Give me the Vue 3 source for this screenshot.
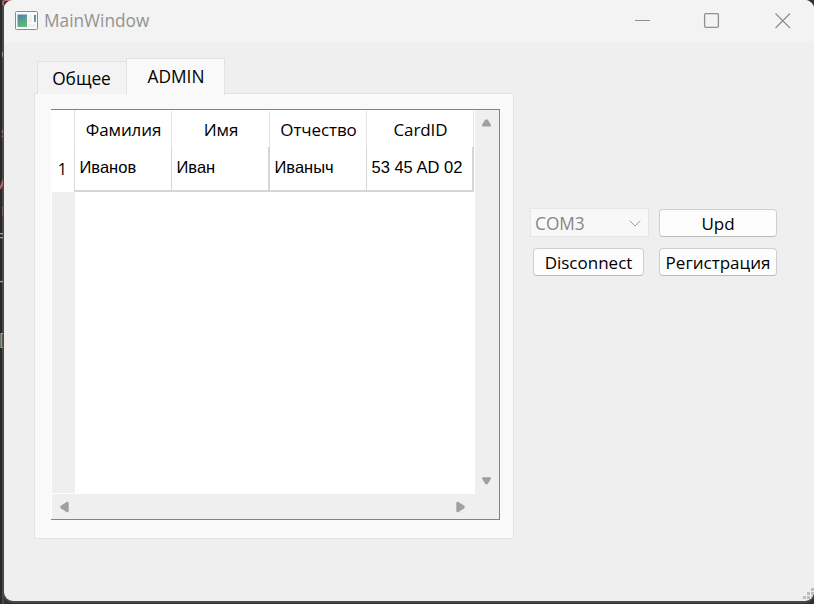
<script setup>
const headers = ['Фамилия', 'Имя', 'Отчество', 'CardID']
const row = ['Иванов', 'Иван', 'Иваныч', '53 45 AD 02']
const fragments = [
  { ch: 'a', top: -8, left: 1, color: '#c9686c' },
  { ch: 'e', top: 45, left: 1, color: '#a9a9a0' },
  { ch: 's', top: 124, left: 0, color: '#c9686c' },
  { ch: 'A', top: 175, left: -1, color: '#c9686c' },
  { ch: 'r', top: 202, left: 0, color: '#d9686c' },
  { ch: '=', top: 227, left: -2, color: '#a9a48c' },
  { ch: '-', top: 272, left: -3, color: '#a9a48c' },
  { ch: '[', top: 331, left: -3, color: '#b9a070' }
]
</script>

<template>
  <div class="desktop">
    <span
      v-for="f in fragments"
      :key="f.top"
      class="fragment"
      :style="{ top: f.top + 'px', left: f.left + 'px', color: f.color }"
    >{{ f.ch }}</span>
    <div class="window">
      <header class="titlebar">
        <svg class="app-icon" width="23" height="19" viewBox="0 0 23 19">
          <defs>
            <linearGradient id="g" x1="0" y1="0" x2="0.4" y2="1">
              <stop offset="0" stop-color="#4a7fae" />
              <stop offset="1" stop-color="#62b67c" />
            </linearGradient>
          </defs>
          <rect x="0.5" y="0.5" width="22" height="18" rx="1" fill="#f8f9fa" stroke="#858b92" />
          <rect x="2.5" y="3.5" width="9.5" height="12.5" fill="url(#g)" />
          <rect x="13" y="4" width="4" height="8" fill="#f0f2ee" />
          <rect x="13" y="13" width="8" height="3" fill="#edefeb" />
          <rect x="19" y="4" width="2" height="7" fill="url(#g)" />
        </svg>
        <span class="title">MainWindow</span>
        <svg class="controls" width="156" height="16" viewBox="0 0 156 16" fill="none" stroke="#8f8f8f">
          <path d="M0 7.5H15" />
          <rect x="69.6" y="0.6" width="13.8" height="13.8" rx="1.3" stroke-width="1.3" />
          <path d="M140.5 0.5L155 15M155 0.5L140.5 15" stroke-width="1.2" />
        </svg>
      </header>

      <main class="content">
        <section class="tabs">
          <nav class="tabbar">
            <div class="tab first"><span>Общее</span></div>
            <div class="tab active"><span>ADMIN</span></div>
          </nav>
          <div class="pane">
            <div class="table">
              <div class="view">
                <div class="vheader">
                  <div class="corner"></div>
                  <div class="rownum">1</div>
                  <div class="vfill"></div>
                </div>
                <div class="cells">
                  <div class="grid head">
                    <div v-for="h in headers" :key="h" class="th"><span>{{ h }}</span></div>
                  </div>
                  <div class="grid body">
                    <div v-for="(c, i) in row" :key="c" class="td" :class="{ thick: i % 2 }"><span>{{ c }}</span></div>
                  </div>
                </div>
              </div>
              <div class="vscroll">
                <svg width="11" height="8" viewBox="0 0 11 8"><path d="M4.2 .8Q5.5-.5 6.8.8L9.8 5.5Q10.5 7.3 9 7.5H2Q.5 7.3 1.2 5.5Z" fill="#a0a0a0" /></svg>
                <svg width="11" height="8" viewBox="0 0 11 8"><path d="M4.2 6.8Q5.5 8 6.8 6.8L9.8 2.1Q10.5.3 9 .2H2Q.5.3 1.2 2.1Z" fill="#a0a0a0" /></svg>
              </div>
              <div class="hscroll">
                <svg width="9" height="12" viewBox="0 0 9 12"><path d="M.8 4.8Q-.4 6 .8 7.2L6.5 11Q8.5 11.7 8.7 10V2Q8.5.3 6.5 1Z" fill="#a0a0a0" /></svg>
                <svg width="9" height="12" viewBox="0 0 9 12"><path d="M8.2 4.8Q9.4 6 8.2 7.2L2.5 11Q.5 11.7.3 10V2Q.5.3 2.5 1Z" fill="#a0a0a0" /></svg>
              </div>
              <div class="scroll-corner"></div>
            </div>
          </div>
        </section>

        <section class="actions">
          <div class="combo">
            <span>COM3</span>
            <svg width="12" height="7" viewBox="0 0 12 7" fill="none" stroke="#a0a0a0"><path d="M.7.7L6 6L11.3.7" /></svg>
          </div>
          <button class="btn"><span>Upd</span></button>
          <button class="btn disconnect"><span>Disconnect</span></button>
          <button class="btn"><span>Регистрация</span></button>
        </section>
      </main>
      <svg class="grip" width="12" height="12" viewBox="0 0 12 12" fill="#bdbdbd">
        <path d="M8 0h3v3h-3zM4 4h3v3h-3zM8 4h3v3h-3zM0 8h3v3h-3zM4 8h3v3h-3zM8 8h3v3h-3z" />
      </svg>
    </div>
  </div>
</template>

<style>
body { overflow: hidden; }
</style>

<style scoped>
* { box-sizing: border-box; }
.desktop {
  position: relative;
  width: 814px;
  height: 604px;
  padding-left: 4px;
  overflow: hidden;
  background: linear-gradient(90deg, #292929 0 2px, #4a4948 2px 4px, #303030 4px);
  font-family: "Open Sans", "Noto Sans", sans-serif;
  font-size: 17.3px;
  color: #000;
}
.fragment {
  position: absolute;
  font: 17px/20px "Liberation Mono", monospace;
}
.window {
  position: relative;
  width: 810px;
  height: 601px;
  background: #efefef;
  border-radius: 9px;
  box-shadow: 0 1px 0 1px #484848;
  overflow: hidden;
}
.titlebar {
  height: 43px;
  display: flex;
  align-items: center;
  padding: 0 23px 3px 11px;
  background: #f3f3f3;
}
.title {
  margin: 1px 0 0 6px;
  color: #929292;
}
.controls { margin: 2px 0 0 auto; }
.content { display: flex; align-items: flex-start; }
.tabs { width: 480px; margin: 15px 0 0 30px; }
.tabbar { display: flex; align-items: flex-end; height: 36px; padding-left: 3px; }
.tab {
  display: flex;
  align-items: center;
  justify-content: center;
  border: 1px solid #e3e3e3;
  border-bottom: 0;
  background: #f3f3f3;
}
.first { width: 90px; height: 33px; padding: 0 2px 0 0; border-right: 0; }
.active { width: 99px; height: 37px; position: relative; z-index: 1; margin-bottom: -1px; padding: 0 0 2px 1px; background: #f9f9f9; margin-left: -1px; }
.pane {
  height: 446px;
  margin-top: -1px;
  padding: 15px 13px 0 16px;
  border: 1px solid #e3e3e3;
  background: #f9f9f9;
}
.table {
  display: grid;
  grid-template-columns: 424px 24px;
  grid-template-rows: 384px 25px;
  width: 449px;
  height: 411px;
  border: 1px solid #82828c;
  border-left: 0;
  background: #efefef;
}
.view { display: flex; background: #fff; }
.vheader { width: 24px; display: flex; flex-direction: column; }
.corner { height: 37px; border-right: 1px solid #e2e2e2; }
.rownum { height: 45px; padding-right: 7px; border-right: 1px solid #dadada; text-align: right; font-size: 16px; line-height: 44px; }
.vfill { flex: 1; margin: 0 0 1px 1px; background: #efefef; }
.cells { width: 400px; }
.grid { display: grid; grid-template-columns: 97px 98px 97px 107px; width: 400px; }
.head { height: 37px; padding-top: 1px; font-size: 17px; letter-spacing: -0.1px; }
.th { display: flex; align-items: center; justify-content: center; padding-left: 1px; border-right: 1px solid #e4e4e4; }
.body { height: 45px; }
.td {
  display: flex;
  align-items: center;
  padding: 0 0 2px 4.5px;
  border-right: 1px solid #d6d6d6;
  border-bottom: 2px solid #d6d6d6;
  font-family: "Liberation Sans", sans-serif;
  font-size: 16.5px;
  white-space: nowrap;
}
.thick { border-right-width: 2px; }
.vscroll { display: flex; flex-direction: column; align-items: center; justify-content: space-between; padding: 9px 2px 9px 0; }
.hscroll { display: flex; align-items: center; justify-content: space-between; padding: 0 10px 0 8px; border-left: 1px solid #fff; }
.actions {
  display: grid;
  grid-template-columns: 119px 118px;
  grid-template-rows: 28px 28px;
  gap: 11px 10px;
  margin: 166px 0 0 16px;
}
.combo {
  display: flex;
  align-items: center;
  justify-content: space-between;
  height: 29px;
  margin-top: -1px;
  padding: 1px 7px 0 4px;
  border: 1px solid #e6e6e6;
  background: #f8f8f8;
  color: #878787;
}
.btn {
  display: flex;
  align-items: center;
  justify-content: center;
  height: 28px;
  padding: 1px 0 0;
  border: 1px solid #cfcfcf;
  border-bottom-color: #b9b9b9;
  border-radius: 4px;
  background: #fdfdfd;
  font: inherit;
  font-size: 17px;
  color: #000;
  white-space: nowrap;
}
.disconnect { width: 111px; margin-left: 3px; }
.grip { position: absolute; right: -1px; bottom: 1px; }
</style>
